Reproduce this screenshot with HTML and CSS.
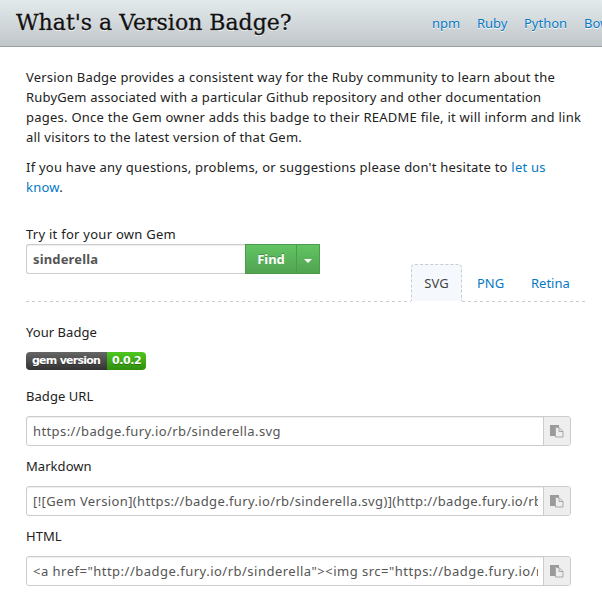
FILE: index.html
```html
<!DOCTYPE html>
<html lang="en">
<head>
<meta charset="utf-8">
<title>Version Badge</title>
<link rel="stylesheet" href="styles.css">
</head>
<body>
<header class="topbar">
  <h1 class="title">What's a Version Badge?</h1>
  <nav class="nav"><a class="nav-npm">npm</a><a class="nav-ruby">Ruby</a><a class="nav-python">Python</a><a>Bower</a></nav>
</header>
<main class="content">
  <p class="intro"><span class="line l1">Version Badge provides a consistent way for the Ruby community to learn about the</span> <span class="line l2">RubyGem associated with a particular Github repository and other documentation</span> <span class="line l3">pages. Once the Gem owner adds this badge to their README file, it will inform and link</span> <span class="line l4">all visitors to the latest version of that Gem.</span></p>
  <p class="intro"><span class="line l5">If you have any questions, problems, or suggestions please don't hesitate to <a>let us</a></span> <span class="line"><a>know</a>.</span></p>
  <section class="finder">
    <form class="search">
      <label class="try">Try it for your own Gem</label>
      <div class="search-row">
        <div class="search-input">sinderella</div>
        <div class="find">Find</div>
        <div class="toggle"><span class="caret"></span></div>
      </div>
    </form>
    <div class="tabs">
      <a class="tab active">SVG</a><a class="tab png">PNG</a><a class="tab retina">Retina</a>
    </div>
  </section>
  <div class="rule"><svg width="560" height="1"><path d="M0 .5H385M436 .5H560" stroke="#ccc" stroke-dasharray="3 3"/></svg></div>
  <div class="label yours">Your Badge</div>
  <div class="badge"><span class="badge-name">gem version</span><span class="badge-value">0.0.2</span></div>
  <div class="label url-label">Badge URL</div>
  <div class="field"><div class="code c1">https://badge.fury.io/rb/sinderella.svg</div><button class="copy"><svg width="14" height="14"><path d="M0 1h9v2H5v9H0z" fill="#9a9a9a"/><path d="M5.500 3.500h3.500l4 4v5.500h-7.500z" fill="#eee" stroke="#a6a6a6"/><path d="M9 3.500v4h4" fill="none" stroke="#a6a6a6"/></svg></button></div>
  <div class="label md-label">Markdown</div>
  <div class="field"><div class="code c2">[![Gem Version](https://badge.fury.io/rb/sinderella.svg)](http://badge.fury.io/rb/sinderella)</div><button class="copy"><svg width="14" height="14"><path d="M0 1h9v2H5v9H0z" fill="#9a9a9a"/><path d="M5.500 3.500h3.500l4 4v5.500h-7.500z" fill="#eee" stroke="#a6a6a6"/><path d="M9 3.500v4h4" fill="none" stroke="#a6a6a6"/></svg></button></div>
  <div class="label html-label">HTML</div>
  <div class="field"><div class="code c3">&lt;a href="http://badge.fury.io/rb/sinderella"&gt;&lt;img src="https://badge.fury.io/rb/sinderella.svg"&gt;&lt;/a&gt;</div><button class="copy"><svg width="14" height="14"><path d="M0 1h9v2H5v9H0z" fill="#9a9a9a"/><path d="M5.500 3.500h3.500l4 4v5.500h-7.500z" fill="#eee" stroke="#a6a6a6"/><path d="M9 3.500v4h4" fill="none" stroke="#a6a6a6"/></svg></button></div>
</main>
</body>
</html>
```

FILE: styles.css
```css
* { box-sizing: border-box; }
body { margin: 0; width: 602px; height: 594px; overflow: hidden; background: #fff; color: #222; font: 13px/20px "Noto Sans", sans-serif; }
a { color: #0679c4; text-decoration: none; }
p { margin: 0; }
.topbar { display: flex; height: 47px; background: linear-gradient(#e3eaec, #c0c6c9); border-bottom: 1px solid #9a9ea0; overflow: hidden; }
.title { margin: 0; padding-left: 16px; width: 432px; flex: none; font: 22px/45px "DejaVu Serif", serif; color: #111; -webkit-text-stroke: .3px #111; text-shadow: 0 1px 0 #fff; white-space: nowrap; }
.nav { display: flex; flex: none; line-height: 46px; text-shadow: 0 1px 0 #fff; }
.nav-npm { width: 45px; }
.nav-ruby { width: 47px; }
.nav-python { width: 60px; }
.content { padding: 20px 0 0 26px; }
.intro { margin-bottom: 10px; }
.line { display: block; white-space: nowrap; letter-spacing: .23px; }
.l1 { letter-spacing: .205px; }
.l2 { letter-spacing: .18px; }
.l3 { letter-spacing: .24px; }
.finder { display: flex; margin-top: 26px; height: 78px; }
.search { width: 385px; }
.try { display: block; height: 21px; line-height: 23px; letter-spacing: .26px; }
.search-row { display: flex; height: 30px; }
.search-input { width: 219px; border: 1px solid #ccc; border-right: 0; border-radius: 3px 0 0 3px; padding-left: 6px; font-weight: bold; line-height: 28px; letter-spacing: .15px; color: #555; box-shadow: inset 0 1px 1px #eee; }
.find { width: 52px; border: 1px solid #4a9c4a; background: linear-gradient(#62c462, #51a351); color: #fff; font-weight: bold; line-height: 28px; text-align: center; text-shadow: 0 -1px 0 #4a934a; }
.toggle { width: 23px; border: 1px solid #4a9c4a; border-left: 0; background: linear-gradient(#62c462, #51a351); display: flex; align-items: center; justify-content: center; }
.caret { border: 4px solid transparent; border-top-color: #fff; border-bottom: 0; margin-top: 3px; }
.tabs { display: flex; align-items: flex-end; }
.tab { height: 37px; line-height: 39px; }
.active { width: 51px; line-height: 37px; border: 1px dashed #ccc; border-bottom: 0; border-radius: 4px 4px 0 0; background: #f5f9fd; color: #444; text-align: center; }
.png { width: 69px; padding-left: 15px; }
.rule { height: 1px; display: flex; }
.label { line-height: 20px; letter-spacing: .05px; }
.yours { margin-top: 20px; }
.badge { display: flex; width: 120px; height: 18px; margin-top: 10px; border-radius: 4px; overflow: hidden; color: #fff; font: bold 11px/18px "DejaVu Sans", sans-serif; text-shadow: 0 1px 0 rgba(0, 0, 0, .3); white-space: nowrap; }
.badge-name { width: 81px; padding-left: 6px; letter-spacing: -.75px; background: linear-gradient(#666, #333); }
.badge-value { width: 39px; padding-left: 5px; letter-spacing: -.4px; background: linear-gradient(#4dc71f, #2f8f0e); }
.url-label { margin-top: 16px; }
.field { display: flex; width: 545px; height: 30px; margin-top: 10px; border: 1px solid #ccc; border-radius: 3px; overflow: hidden; box-shadow: inset 0 1px 1px #eee; }
.code { flex: none; width: 505px; margin: 0 5px 0 6px; overflow: hidden; white-space: nowrap; line-height: 28px; letter-spacing: .4px; color: #555; }
.c2 { letter-spacing: .36px; }
.c3 { letter-spacing: .49px; }
.copy { width: 28px; flex: none; padding: 0 0 0 6px; border: 0; border-left: 1px solid #ccc; background: #eee; display: flex; align-items: center; justify-content: flex-start; }
.md-label, .html-label { margin-top: 10px; }
```
